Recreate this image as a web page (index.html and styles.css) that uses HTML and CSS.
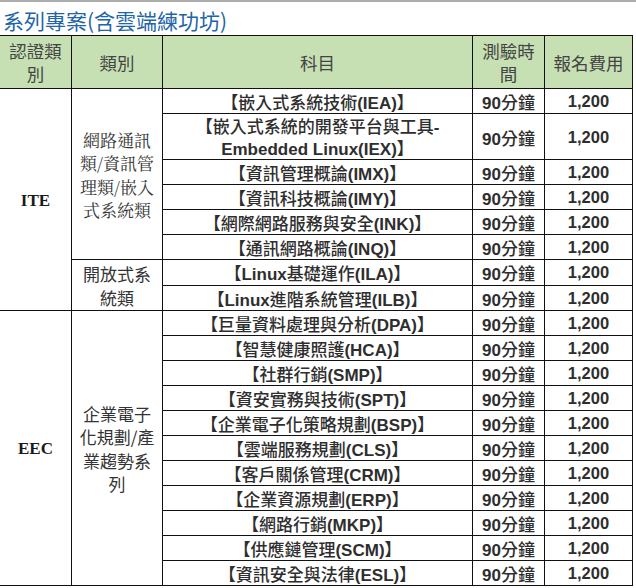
FILE: index.html
```html
<!DOCTYPE html>
<html lang="zh-Hant">
<head>
<meta charset="utf-8">
<title>系列專案(含雲端練功坊)</title>
<link rel="stylesheet" href="styles.css">
</head>
<body>
<div class="page">
  <h1 class="title">系列專案(含雲端練功坊)</h1>
  <table class="grid">
    <colgroup>
      <col class="c-cert">
      <col class="c-cat">
      <col class="c-subj">
      <col class="c-time">
      <col class="c-fee">
    </colgroup>
    <thead>
      <tr>
        <th>認證類<br>別</th>
        <th>類別</th>
        <th>科目</th>
        <th>測驗時<br>間</th>
        <th>報名費用</th>
      </tr>
    </thead>
    <tbody>
      <tr>
        <td class="cert" rowspan="8">ITE</td>
        <td class="cat ming" rowspan="6">網路通訊<br>類/資訊管<br>理類/嵌入<br>式系統類</td>
        <td class="subj">【嵌入式系統技術<b>(IEA)</b>】</td>
        <td class="time"><b>90</b>分鐘</td>
        <td class="fee">1,200</td>
      </tr>
      <tr>
        <td class="subj two">【嵌入式系統的開發平台與工具<b>-</b><br><b>Embedded Linux(IEX)</b>】</td>
        <td class="time"><b>90</b>分鐘</td>
        <td class="fee">1,200</td>
      </tr>
      <tr>
        <td class="subj">【資訊管理概論<b>(IMX)</b>】</td>
        <td class="time"><b>90</b>分鐘</td>
        <td class="fee">1,200</td>
      </tr>
      <tr>
        <td class="subj">【資訊科技概論<b>(IMY)</b>】</td>
        <td class="time"><b>90</b>分鐘</td>
        <td class="fee">1,200</td>
      </tr>
      <tr>
        <td class="subj">【網際網路服務與安全<b>(INK)</b>】</td>
        <td class="time"><b>90</b>分鐘</td>
        <td class="fee">1,200</td>
      </tr>
      <tr>
        <td class="subj">【通訊網路概論<b>(INQ)</b>】</td>
        <td class="time"><b>90</b>分鐘</td>
        <td class="fee">1,200</td>
      </tr>
      <tr>
        <td class="cat" rowspan="2">開放式系<br>統類</td>
        <td class="subj">【<b>Linux</b>基礎運作<b>(ILA)</b>】</td>
        <td class="time"><b>90</b>分鐘</td>
        <td class="fee">1,200</td>
      </tr>
      <tr>
        <td class="subj">【<b>Linux</b>進階系統管理<b>(ILB)</b>】</td>
        <td class="time"><b>90</b>分鐘</td>
        <td class="fee">1,200</td>
      </tr>
      <tr>
        <td class="cert" rowspan="11">EEC</td>
        <td class="cat" rowspan="11">企業電子<br>化規劃/產<br>業趨勢系<br>列</td>
        <td class="subj">【巨量資料處理與分析<b>(DPA)</b>】</td>
        <td class="time"><b>90</b>分鐘</td>
        <td class="fee">1,200</td>
      </tr>
      <tr>
        <td class="subj">【智慧健康照護<b>(HCA)</b>】</td>
        <td class="time"><b>90</b>分鐘</td>
        <td class="fee">1,200</td>
      </tr>
      <tr>
        <td class="subj">【社群行銷<b>(SMP)</b>】</td>
        <td class="time"><b>90</b>分鐘</td>
        <td class="fee">1,200</td>
      </tr>
      <tr>
        <td class="subj">【資安實務與技術<b>(SPT)</b>】</td>
        <td class="time"><b>90</b>分鐘</td>
        <td class="fee">1,200</td>
      </tr>
      <tr>
        <td class="subj">【企業電子化策略規劃<b>(BSP)</b>】</td>
        <td class="time"><b>90</b>分鐘</td>
        <td class="fee">1,200</td>
      </tr>
      <tr>
        <td class="subj">【雲端服務規劃<b>(CLS)</b>】</td>
        <td class="time"><b>90</b>分鐘</td>
        <td class="fee">1,200</td>
      </tr>
      <tr>
        <td class="subj">【客戶關係管理<b>(CRM)</b>】</td>
        <td class="time"><b>90</b>分鐘</td>
        <td class="fee">1,200</td>
      </tr>
      <tr>
        <td class="subj">【企業資源規劃<b>(ERP)</b>】</td>
        <td class="time"><b>90</b>分鐘</td>
        <td class="fee">1,200</td>
      </tr>
      <tr>
        <td class="subj">【網路行銷<b>(MKP)</b>】</td>
        <td class="time"><b>90</b>分鐘</td>
        <td class="fee">1,200</td>
      </tr>
      <tr>
        <td class="subj">【供應鏈管理<b>(SCM)</b>】</td>
        <td class="time"><b>90</b>分鐘</td>
        <td class="fee">1,200</td>
      </tr>
      <tr>
        <td class="subj">【資訊安全與法律<b>(ESL)</b>】</td>
        <td class="time"><b>90</b>分鐘</td>
        <td class="fee">1,200</td>
      </tr>
    </tbody>
  </table>
</div>
</body>
</html>
```

FILE: styles.css
```css
html, body {
  margin: 0;
  padding: 0;
  background: #ffffff;
}

body {
  font-family: "Liberation Sans", "Noto Sans CJK TC", sans-serif;
  color: #333333;
  overflow: hidden;
}

.page {
  border-top: 2px solid #acacac;
  width: 636px;
}

.title {
  margin: 0;
  padding: 5px 0 0 3px;
  height: 28px;
  font-family: "Noto Sans CJK TC", sans-serif;
  font-weight: normal;
  font-size: 21px;
  line-height: 26px;
  color: #2264a8;
}

.grid {
  border-collapse: collapse;
  table-layout: fixed;
  width: 633px;
  margin-left: -1px;
}

.c-cert { width: 72px; }
.c-cat { width: 91px; }
.c-subj { width: 310px; }
.c-time { width: 72px; }
.c-fee { width: 88px; }

.grid th,
.grid td {
  border: 1px solid #111111;
  text-align: center;
  vertical-align: middle;
  padding: 2px 2px 1px;
  height: 21px;
  font-size: 17px;
  line-height: 21px;
  overflow: hidden;
  white-space: nowrap;
}

.grid th {
  background: #c6e0b4;
  font-family: "Noto Sans CJK TC", sans-serif;
  font-weight: normal;
  font-size: 17.5px;
  color: #444444;
  line-height: 23px;
  padding: 3px 2px 3px;
}

.grid td b {
  font-family: "Liberation Sans", sans-serif;
  font-weight: bold;
  line-height: 14px;
}

.grid .subj,
.grid .time {
  font-family: "Noto Sans CJK TC", sans-serif;
  font-weight: 500;
  color: #2e2e2e;
}

.grid .subj.two {
  line-height: 22px;
  padding: 1px 2px 0;
}

.grid .fee {
  font-family: "Liberation Sans", sans-serif;
  font-weight: bold;
  font-size: 16.5px;
  color: #2e2e2e;
}

.grid .cert {
  font-family: "Liberation Serif", serif;
  font-weight: bold;
  font-size: 17px;
  color: #1a1a1a;
}

.grid .cat {
  font-family: "Noto Sans CJK TC", sans-serif;
  line-height: 23.5px;
  color: #333333;
}

.grid .cat.ming {
  font-family: "Noto Serif CJK TC", "Noto Sans CJK TC", serif;
}
```
